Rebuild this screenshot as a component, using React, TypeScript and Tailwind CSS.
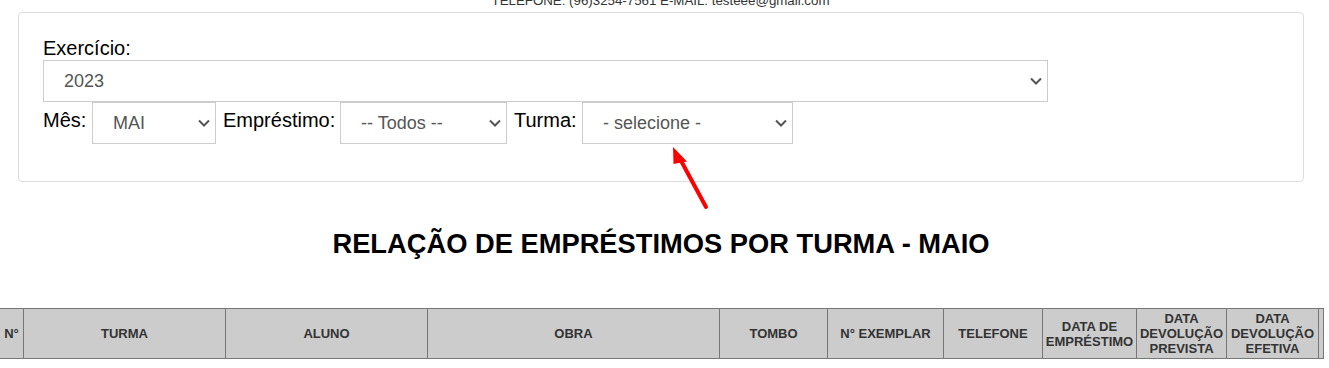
import React from "react";

function Chevron() {
  return (
    <svg width="12" height="8" viewBox="0 0 12 8" className="shrink-0">
      <path d="M1 1.5 L6 6.5 L11 1.5" fill="none" stroke="#555" strokeWidth="2" />
    </svg>
  );
}

function FakeSelect({ value, className }: { value: string; className: string }) {
  return (
    <div
      className={
        "h-[42px] border border-[#ccc] bg-white flex items-center justify-between pl-[20px] pr-[5px] text-[18px] leading-[20px] text-[#555] shrink-0 " +
        className
      }
    >
      <span>{value}</span>
      <Chevron />
    </div>
  );
}

const cols: { w: string; label: React.ReactNode }[] = [
  { w: "w-[24px]", label: "N°" },
  { w: "w-[202px]", label: "TURMA" },
  { w: "w-[202px]", label: "ALUNO" },
  { w: "w-[292px]", label: "OBRA" },
  { w: "w-[108px]", label: "TOMBO" },
  { w: "w-[116px]", label: "N° EXEMPLAR" },
  { w: "w-[99px]", label: "TELEFONE" },
  { w: "w-[94px]", label: <>DATA DE<br />EMPRÉSTIMO</> },
  { w: "w-[90px]", label: <>DATA<br />DEVOLUÇÃO<br />PREVISTA</> },
  { w: "w-[92px]", label: <>DATA<br />DEVOLUÇÃO<br />EFETIVA</> },
  { w: "w-[5px]", label: "" },
];

export default function App() {
  return (
    <div className="relative w-[1329px] h-[368px] overflow-hidden bg-white font-['Liberation_Sans',Arial,sans-serif]">
      <div className="-mt-[7px] h-[15px] w-[1321px] text-center text-[13.3px] leading-[15px] text-[#333]">
        TELEFONE: (96)3254-7561 E-MAIL: testeee@gmail.com
      </div>

      <div className="mt-[4px] ml-[18px] w-[1286px] h-[170px] border border-[#ddd] rounded-[4px] pt-[23px] pl-[24px]">
        <div className="text-[20px] leading-[24px] text-black">Exercício:</div>
        <FakeSelect value="2023" className="w-[1005px]" />
        <div className="flex items-start">
          <span className="w-[49px] shrink-0 pt-[6px] text-[20px] leading-[24px] text-black">Mês:</span>
          <FakeSelect value="MAI" className="w-[124px] mr-[7px]" />
          <span className="w-[117px] shrink-0 pt-[6px] text-[20px] leading-[24px] text-black">Empréstimo:</span>
          <FakeSelect value="-- Todos --" className="w-[167px] mr-[7px]" />
          <span className="w-[68px] shrink-0 pt-[6px] text-[20px] leading-[24px] text-black">Turma:</span>
          <FakeSelect value="- selecione -" className="w-[211px]" />
        </div>
      </div>

      <h1 className="mt-[47px] w-[1322px] text-center text-[27.3px] leading-[30px] font-bold text-black">
        RELAÇÃO DE EMPRÉSTIMOS POR TURMA - MAIO
      </h1>

      <div className="mt-[49px] flex h-[51px] w-[1324px] border-y border-[#777] bg-[#ccc]">
        {cols.map((c, i) => (
          <div
            key={i}
            className={
              "h-full border-r border-[#777] flex items-center justify-center text-center text-[13px] leading-[15px] font-bold text-[#333] shrink-0 " +
              c.w
            }
          >
            {c.label}
          </div>
        ))}
      </div>

      <svg
        className="absolute left-[660px] top-[140px]"
        width="60"
        height="75"
        viewBox="0 0 60 75"
      >
        <line x1="46" y1="67" x2="19" y2="17" stroke="#f00" strokeWidth="4" strokeLinecap="round" />
        <polygon points="13,7 13.5,24 27,21.5" fill="#f00" />
      </svg>
    </div>
  );
}
